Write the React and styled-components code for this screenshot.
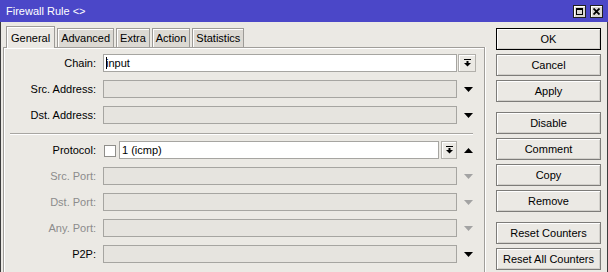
import React from 'react';
import styled, { createGlobalStyle } from 'styled-components';

const GlobalStyle = createGlobalStyle`
    html, body {
        margin: 0;
        padding: 0;
        background: #ebe9e4;
    }
    body {
        font-family: "Liberation Sans", Arial, sans-serif;
        font-size: 11px;
        color: #000;
    }
`;

const Window = styled.div`
    width: 608px;
    height: 272px;
    overflow: hidden;
    display: flex;
    flex-direction: column;
    background: #ebe9e4;
`;

const TitleBar = styled.div`
    height: 22px;
    flex: none;
    box-sizing: border-box;
    padding: 0 5px 0 6px;
    display: flex;
    align-items: center;
    justify-content: space-between;
    background: #4b47c8;
    color: #fff;
    font-size: 11px;
`;

const TitleButtons = styled.div`
    display: flex;
    gap: 4px;
`;

const TitleButton = styled.div`
    width: 13px;
    height: 13px;
    box-sizing: border-box;
    border: 1px solid #202020;
    background: #d9d7d2;
    box-shadow: inset 1px 1px #fff;
    display: flex;
    align-items: center;
    justify-content: center;
`;

const Body = styled.div`
    flex: 1;
    min-height: 0;
    display: flex;
    border-left: 1px solid #3c3c3c;
    border-right: 1px solid #3c3c3c;
`;

const Main = styled.div`
    width: 486px;
    box-sizing: border-box;
    padding: 4px 2px 0 2px;
    display: flex;
    flex-direction: column;
`;

const Tabs = styled.div`
    height: 22px;
    display: flex;
    align-items: flex-end;
    gap: 2px;
    padding-left: 3px;
    margin-bottom: -1px;
    position: relative;
    z-index: 1;
`;

const Tab = styled.div`
    box-sizing: border-box;
    height: ${p => (p.$active ? 22 : 19)}px;
    margin-bottom: ${p => (p.$active ? 0 : 1)}px;
    padding: 0 ${p => (p.$active ? 4 : 3)}px;
    display: flex;
    align-items: center;
    background: ${p => (p.$active ? '#ebe9e4' : '#dcd9d3')};
    border: 1px solid #9d9b97;
    border-bottom: none;
    box-shadow: inset 1px 1px #fff;
`;

const Panel = styled.div`
    flex: 1;
    border: 1px solid #a09e9a;
    border-bottom: none;
    box-shadow: 1px 0 0 #fff, inset 1px 1px #fff;
    padding: 6px 6px 0 0;
`;

const FieldRow = styled.div`
    display: grid;
    grid-template-columns: 98px 354px 20px;
    column-gap: 1px;
    height: 18px;
    align-items: center;

    & + & {
        margin-top: 8px;
    }
`;

const Label = styled.div`
    text-align: right;
    padding-right: 6px;
    white-space: nowrap;
    color: ${p => (p.$disabled ? '#8c8c8c' : '#000')};
`;

const Field = styled.div`
    display: flex;
    align-items: center;
    gap: 2px;
    height: 18px;
`;

const TextBox = styled.div`
    position: relative;
    flex: 1;
    height: 18px;
    box-sizing: border-box;
    border: 1px solid #a6a5a1;
    background: ${p => (p.$disabled ? '#e6e4df' : '#fff')};
    padding: 0 2px;
    line-height: 16px;
    white-space: nowrap;
`;

const Caret = styled.span`
    position: absolute;
    left: 2px;
    top: 2px;
    bottom: 2px;
    width: 1px;
    background: #000;
`;

const CheckBox = styled.div`
    width: 12px;
    height: 12px;
    box-sizing: border-box;
    margin: 2px 1px 0 1px;
    border: 1px solid #8f8e8a;
    background: #fff;
    flex: none;
`;

const DropButton = styled.div`
    width: ${p => p.$w || 18}px;
    height: 18px;
    box-sizing: border-box;
    flex: none;
    border: 1px solid #b2b0ab;
    background: #ebe9e4;
    box-shadow: inset 1px 1px #fff;
    display: flex;
    align-items: center;
    justify-content: center;
`;

const ArrowCell = styled.div`
    display: flex;
    justify-content: center;
    align-items: center;
    height: 18px;
`;

const Separator = styled.div`
    height: 1px;
    margin: 9px 5px 7px 6px;
    background: #a8a6a2;
    box-shadow: 0 1px 0 #fff;
`;

const Side = styled.div`
    width: 120px;
    box-sizing: border-box;
    padding: 6px 6px 0 9px;
    display: flex;
    flex-direction: column;
`;

const Button = styled.button`
    width: 105px;
    height: 22px;
    flex: none;
    box-sizing: border-box;
    margin: ${p => (p.$first ? 0 : p.$group ? 10 : 4)}px 0 0 0;
    padding: 0;
    font-family: "Liberation Sans", Arial, sans-serif;
    font-size: 11px;
    color: #000;
    background: #ebe9e4;
    border: 1px solid ${p => (p.$default ? '#000' : '#7d7c79')};
    box-shadow: inset 1px 1px #fff, inset -1px -1px #d2d0cb;
`;

const DropIcon = () => (
    <svg width="7" height="8" viewBox="0 0 7 8">
        <rect x="0" y="0" width="7" height="1" fill="#000" />
        <rect x="2.5" y="2" width="2" height="2" fill="#000" />
        <polygon points="0,4 7,4 3.5,7.5" fill="#000" />
    </svg>
);

const Triangle = ({ up, color = '#000' }) => (
    <svg width="9" height="5" viewBox="0 0 9 5">
        <polygon points={up ? '0,5 9,5 4.5,0' : '0,0 9,0 4.5,5'} fill={color} />
    </svg>
);

const MaxIcon = () => (
    <svg width="7" height="7" viewBox="0 0 7 7">
        <rect x="0.5" y="0.5" width="6" height="6" fill="none" stroke="#000" />
        <rect x="0" y="0" width="7" height="2" fill="#000" />
    </svg>
);

const CloseIcon = () => (
    <svg width="7" height="7" viewBox="0 0 7 7">
        <path d="M0.5 0.5 L6.5 6.5 M6.5 0.5 L0.5 6.5" stroke="#000" strokeWidth="1.8" />
    </svg>
);

const tabs = ['General', 'Advanced', 'Extra', 'Action', 'Statistics'];

const buttons = [
    { text: 'OK', def: true },
    { text: 'Cancel' },
    { text: 'Apply' },
    { text: 'Disable', group: true },
    { text: 'Comment' },
    { text: 'Copy' },
    { text: 'Remove' },
    { text: 'Reset Counters', group: true },
    { text: 'Reset All Counters' },
];

const AddressRow = ({ label, disabled }) => (
    <FieldRow>
        <Label $disabled={disabled}>{label}</Label>
        <TextBox $disabled />
        <ArrowCell>
            <Triangle color={disabled ? '#a3a3a3' : '#000'} />
        </ArrowCell>
    </FieldRow>
);

const App = () => {
    return (
        <Window>
            <GlobalStyle />
            <TitleBar>
                <span>Firewall Rule &lt;&gt;</span>
                <TitleButtons>
                    <TitleButton><MaxIcon /></TitleButton>
                    <TitleButton><CloseIcon /></TitleButton>
                </TitleButtons>
            </TitleBar>
            <Body>
                <Main>
                    <Tabs>
                        {tabs.map((t, i) => (
                            <Tab key={t} $active={i === 0}>{t}</Tab>
                        ))}
                    </Tabs>
                    <Panel>
                        <FieldRow>
                            <Label>Chain:</Label>
                            <TextBox>
                                input
                                <Caret />
                            </TextBox>
                            <DropButton><DropIcon /></DropButton>
                        </FieldRow>
                        <AddressRow label="Src. Address:" />
                        <AddressRow label="Dst. Address:" />

                        <Separator />

                        <FieldRow>
                            <Label>Protocol:</Label>
                            <Field>
                                <CheckBox />
                                <TextBox>1 (icmp)</TextBox>
                                <DropButton $w={16}><DropIcon /></DropButton>
                            </Field>
                            <ArrowCell>
                                <Triangle up />
                            </ArrowCell>
                        </FieldRow>
                        <AddressRow label="Src. Port:" disabled />
                        <AddressRow label="Dst. Port:" disabled />
                        <AddressRow label="Any. Port:" disabled />
                        <AddressRow label="P2P:" />
                    </Panel>
                </Main>
                <Side>
                    {buttons.map((b, i) => (
                        <Button
                            key={b.text}
                            type="button"
                            $first={i === 0}
                            $group={b.group}
                            $default={b.def}
                        >
                            {b.text}
                        </Button>
                    ))}
                </Side>
            </Body>
        </Window>
    );
};

export default App;
